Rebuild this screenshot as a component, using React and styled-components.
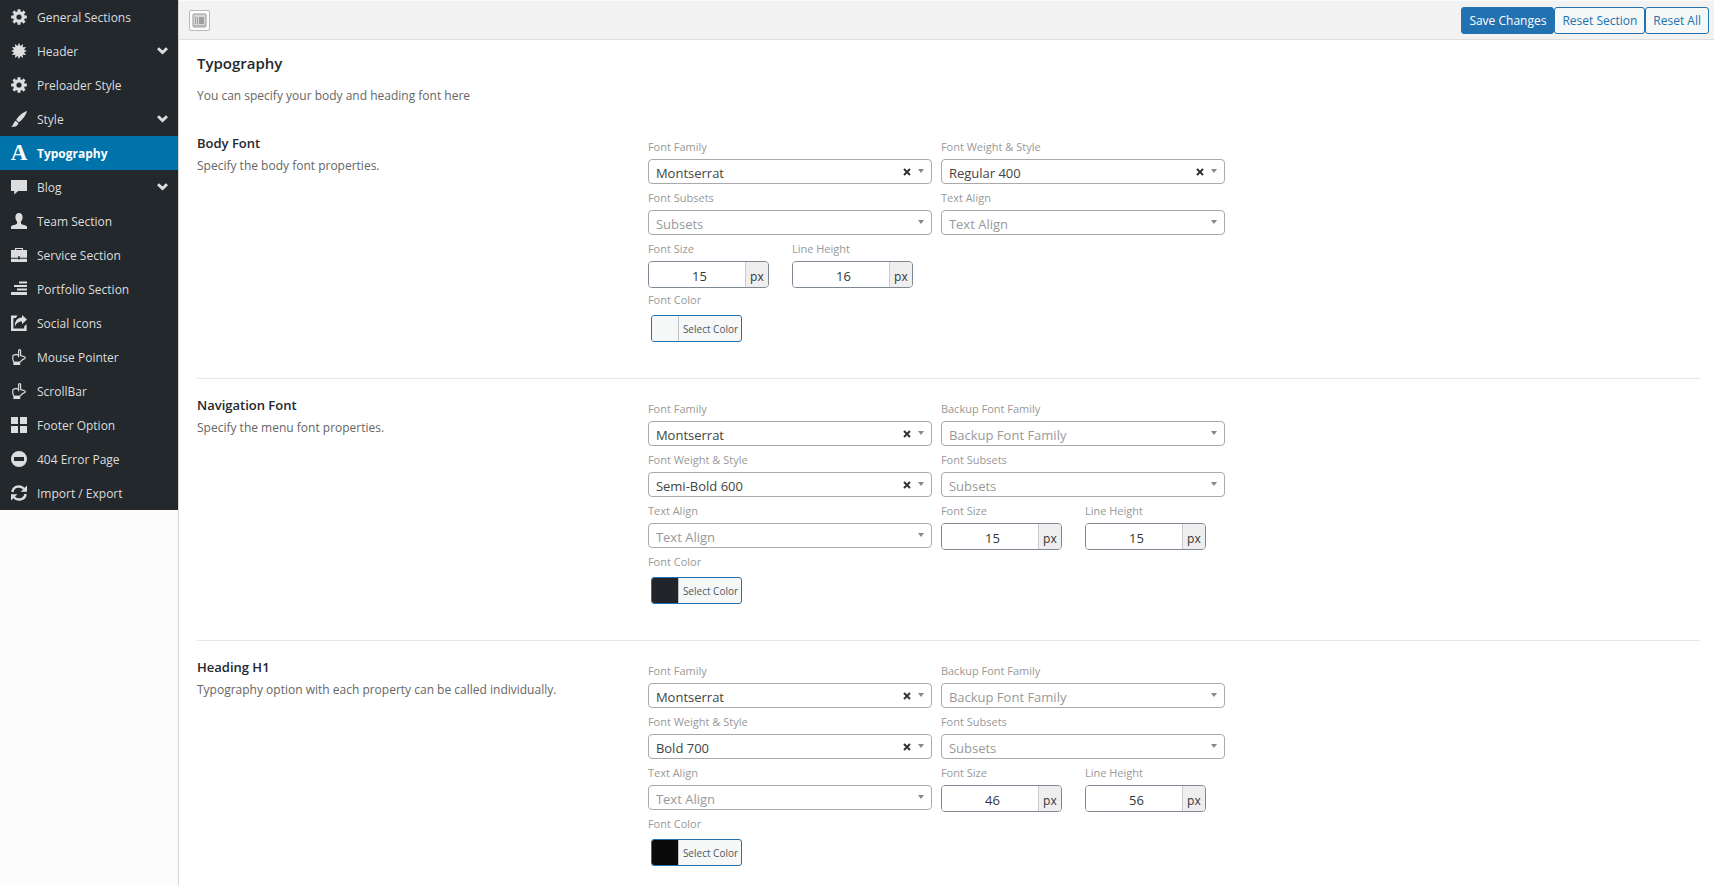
import React, { useState } from "react";
import styled, { createGlobalStyle } from "styled-components";

const GlobalStyle = createGlobalStyle`
  * {
    box-sizing: border-box;
  }

  body {
    margin: 0;
    background: #ffffff;
    color: #3c434a;
    font-family: "Open Sans", "Noto Sans", sans-serif;
    font-size: 12px;
  }

  button,
  input,
  select {
    font-family: inherit;
  }
`;

const Page = styled.div`
  display: flex;
  min-height: 100vh;
`;

const Sidebar = styled.nav`
  flex: 0 0 179px;
  background: #fcfcfc;
  border-right: 1px solid #d4d4d4;
`;

const Menu = styled.ul`
  margin: 0;
  padding: 0;
  list-style: none;
  background: #23282d;
`;

const MenuLink = styled.a`
  display: flex;
  align-items: center;
  gap: 10px;
  height: 34px;
  padding: 0 10px 0 11px;
  background: ${(props) => (props.$active ? "#0073aa" : "transparent")};
  color: ${(props) => (props.$active ? "#ffffff" : "#dddddd")};
  font-weight: ${(props) => (props.$active ? 700 : 400)};
  line-height: 18px;
  text-decoration: none;

  span {
    flex: 1;
    padding-top: 2px;
  }

  svg {
    flex: none;
    fill: currentColor;
  }
`;

const LetterIcon = styled.b`
  display: flex;
  justify-content: center;
  width: 16px;
  font-family: "Liberation Serif", serif;
  font-size: 23px;
  line-height: 16px;
`;

const Main = styled.main`
  flex: 1;
  min-width: 0;
`;

const Toolbar = styled.header`
  display: flex;
  align-items: center;
  height: 40px;
  padding: 1px 5px 0 10px;
  background: #f2f2f2;
  border-top: 1px solid #fbfbfb;
  border-bottom: 1px solid #dedede;
`;

const ExpandButton = styled.button`
  display: flex;
  align-items: center;
  justify-content: center;
  width: 21px;
  height: 21px;
  margin-right: auto;
  padding: 0;
  background: #fcfcfc;
  border: 1px solid #bbbbbb;
  border-radius: 2px;
`;

const ActionButton = styled.button`
  height: 27px;
  padding: 0 7px;
  background: ${(props) => (props.$primary ? "#2271b1" : "#f6f7f7")};
  border: 1px solid #2271b1;
  border-radius: 3px;
  color: ${(props) => (props.$primary ? "#ffffff" : "#2271b1")};
  font-size: 12px;
  line-height: 24px;
`;

const Content = styled.div`
  padding: 0 14px 0 18px;
`;

const Intro = styled.div`
  height: 77px;
  padding-top: 11px;

  h1 {
    margin: 0 0 12px;
    color: #23282d;
    font-size: 15px;
    font-weight: 600;
    line-height: 24px;
  }

  p {
    margin: 0;
    color: #666666;
    line-height: 18px;
  }
`;

const Section = styled.section`
  display: flex;
  padding: 21px 0 36px;
  border-bottom: 1px solid #e7e7e7;

  &:last-child {
    padding-bottom: 0;
    border-bottom: 0;
  }
`;

const SectionInfo = styled.div`
  flex: 0 0 30%;

  h2 {
    margin: -4px 0 4px;
    color: #23282d;
    font-size: 13px;
    font-weight: 600;
    line-height: 18px;
  }

  p {
    margin: 0;
    color: #666666;
    line-height: 20px;
  }
`;

const Fields = styled.div`
  display: grid;
  flex: 0 1 577px;
  grid-template-columns: 1fr 1fr;
  grid-auto-rows: minmax(51px, auto);
  column-gap: 9px;
`;

const Label = styled.label`
  display: block;
  margin-bottom: 3px;
  color: #999999;
  font-size: 11px;
  line-height: 18px;
`;

const SelectBox = styled.div`
  position: relative;

  select {
    display: block;
    width: 100%;
    height: 25px;
    padding: 2px 40px 0 7px;
    appearance: none;
    background: #ffffff;
    border: 1px solid #aaaaaa;
    border-radius: 4px;
    color: ${(props) => (props.$empty ? "#999999" : "#444444")};
    font-size: 13px;
    line-height: 20px;
  }
`;

const SelectTools = styled.div`
  position: absolute;
  top: 1px;
  right: 8px;
  display: flex;
  align-items: center;
  gap: 7px;
  height: 22px;
  pointer-events: none;

  button {
    display: flex;
    padding: 2px 0 0;
    background: none;
    border: 0;
    pointer-events: auto;
  }
`;

const NumberPair = styled.div`
  display: flex;
  gap: 23px;
`;

const NumberBox = styled.div`
  display: flex;
  width: 121px;
  height: 27px;
  border: 1px solid #7e8993;
  border-radius: 4px;
  overflow: hidden;

  input {
    flex: 1;
    min-width: 0;
    padding: 2px 0 0 5px;
    border: 0;
    color: #32373c;
    font-size: 13px;
    text-align: center;
  }

  span {
    width: 23px;
    padding-top: 3px;
    background: #eeeeee;
    border-left: 1px solid #cccccc;
    color: #32373c;
    line-height: 24px;
    text-align: center;
  }
`;

const ColorButton = styled.button`
  display: flex;
  height: 27px;
  margin: 6px 0 0 3px;
  padding: 0;
  background: #f6f7f7;
  border: 1px solid #2271b1;
  border-radius: 3px;
  overflow: hidden;
  color: #50575e;
  font-size: 10px;
  line-height: 27px;

  i {
    width: 27px;
    align-self: stretch;
    background: ${(props) => props.$color};
    border-right: 1px solid #c3c4c7;
  }

  span {
    padding: 0 3px 0 4px;
  }
`;

const radial = (points) =>
  points.map(([r, deg]) => {
    const a = (deg * Math.PI) / 180;
    return `${(8 + r * Math.sin(a)).toFixed(2)} ${(8 - r * Math.cos(a)).toFixed(2)}`;
  });

const gearTeeth = radial(
  [0, 45, 90, 135, 180, 225, 270, 315].flatMap((d) => [
    [5.9, d - 14],
    [8, d - 11],
    [8, d + 11],
    [5.9, d + 14],
  ])
);

const burstSpikes = radial(
  Array.from({ length: 24 }, (_, i) => [i % 2 ? 5.2 : 8.2, i * 15])
);

const icons = {
  gear: (
    <path
      fillRule="evenodd"
      d={`M${gearTeeth.join("L")}ZM8 5.4a2.6 2.6 0 1 0 0 5.2a2.6 2.6 0 1 0 0-5.2z`}
    />
  ),
  burst: <path d={`M${burstSpikes.join("L")}Z`} />,
  brush: (
    <path d="M16 0C12 1.2 7.2 5.2 5.2 9l2.7 2.3C11.6 8.6 15.2 4 16 0zM4.7 9.7C2.6 10.6 3.2 13.2 0 15.8c3.4.3 7-.6 7.4-3.8z" />
  ),
  comment: <path d="M0 1h16v11H7.2L3.2 15.6V12H0z" />,
  person: (
    <path d="M8 0C5.5 0 4.4 1.8 4.4 4c0 2 .8 3.7 1.7 4.8v1.4C6 12 0 12 0 13.7V16h16v-2.3c0-1.7-6-1.7-6.1-3.5V8.8c.9-1.1 1.7-2.8 1.7-4.8C11.6 1.8 10.5 0 8 0z" />
  ),
  briefcase: (
    <path
      fillRule="evenodd"
      d="M4 1h8v2h4v7.7H8.7V9H7.3v1.7H0V3h4zM5.2 2v1h5.6V2zM0 11.7h7.3v.8h1.4v-.8H16V15H0z"
    />
  ),
  lines: <path d="M8 .5h8v2H8zM3 4h13v2H3zM6 7.5h10v2H6zM0 11h16v3H0z" />,
  share: (
    <path d="M0 .6h6.5L4.8 3H2.4v10.6h10.8v-2.4l2.4-2V16H0zM11 0l5 4.6-5 4.6V6.6C7.6 6.6 5.2 8 4 11.8 3.4 6.3 6.3 2.8 11 2.6z" />
  ),
  hand: (
    <>
      <path
        d="M3 13C1.6 11.6 1.6 9 2 6.4L5 5.4l2.6 1V1.6c0-1.2 2-1.2 2 0v5l4 1.2c1 .4.8 1.6-.2 2l-1.8.8L9 13.2M7.6 6.2v2"
        fill="none"
        stroke="currentColor"
        strokeWidth="1.2"
      />
      <path d="M2.4 12.6h6.8V16H2.4z" />
    </>
  ),
  grid: <path d="M0 0h7v7H0zM9 0h7v7H9zM0 9h7v7H0zM9 9h7v7H9z" />,
  minus: (
    <path
      fillRule="evenodd"
      d="M8 0a8 8 0 1 0 0 16A8 8 0 1 0 8 0zM3 6h10v4H3z"
    />
  ),
  sync: (
    <>
      <path
        d="M1.4 7C2.2 1 9.6-.2 13 3.8M14.6 9C13.8 15 6.4 16.2 3 12.2"
        fill="none"
        stroke="currentColor"
        strokeWidth="2.4"
      />
      <path d="M16 .4v6.4H9.6zM0 15.6V9.2h6.4z" />
    </>
  ),
};

const menuItems = [
  { name: "General Sections", icon: "gear" },
  { name: "Header", icon: "burst", open: true },
  { name: "Preloader Style", icon: "gear" },
  { name: "Style", icon: "brush", open: true },
  { name: "Typography", icon: "letter", active: true },
  { name: "Blog", icon: "comment", open: true },
  { name: "Team Section", icon: "person" },
  { name: "Service Section", icon: "briefcase" },
  { name: "Portfolio Section", icon: "lines" },
  { name: "Social Icons", icon: "share" },
  { name: "Mouse Pointer", icon: "hand" },
  { name: "ScrollBar", icon: "hand" },
  { name: "Footer Option", icon: "grid" },
  { name: "404 Error Page", icon: "minus" },
  { name: "Import / Export", icon: "sync" },
];

const sections = [
  {
    id: "body",
    title: "Body Font",
    text: "Specify the body font properties.",
    color: "#f6f7f7",
    fields: [
      { label: "Font Family", value: "Montserrat" },
      { label: "Font Weight & Style", value: "Regular 400" },
      { label: "Font Subsets", placeholder: "Subsets" },
      { label: "Text Align", placeholder: "Text Align" },
      { size: 15, height: 16, wide: true },
    ],
  },
  {
    id: "nav",
    title: "Navigation Font",
    text: "Specify the menu font properties.",
    color: "#212529",
    fields: [
      { label: "Font Family", value: "Montserrat" },
      { label: "Backup Font Family", placeholder: "Backup Font Family" },
      { label: "Font Weight & Style", value: "Semi-Bold 600" },
      { label: "Font Subsets", placeholder: "Subsets" },
      { label: "Text Align", placeholder: "Text Align" },
      { size: 15, height: 15 },
    ],
  },
  {
    id: "h1",
    title: "Heading H1",
    text: "Typography option with each property can be called individually.",
    color: "#0a0a0a",
    fields: [
      { label: "Font Family", value: "Montserrat" },
      { label: "Backup Font Family", placeholder: "Backup Font Family" },
      { label: "Font Weight & Style", value: "Bold 700" },
      { label: "Font Subsets", placeholder: "Subsets" },
      { label: "Text Align", placeholder: "Text Align" },
      { size: 46, height: 56 },
    ],
  },
];

function MenuIcon({ name }) {
  if (name === "letter") {
    return <LetterIcon aria-hidden="true">A</LetterIcon>;
  }
  return (
    <svg width="16" height="16" viewBox="0 0 16 16" aria-hidden="true">
      {icons[name]}
    </svg>
  );
}

function SelectField({ id, label, value, placeholder }) {
  const [current, setCurrent] = useState(value || "");

  return (
    <div>
      <Label htmlFor={id}>{label}</Label>
      <SelectBox $empty={!current}>
        <select id={id} value={current} onChange={(e) => setCurrent(e.target.value)}>
          <option value="">{placeholder || ""}</option>
          {value && <option value={value}>{value}</option>}
        </select>
        <SelectTools>
          {current && (
            <button type="button" aria-label="Clear" onClick={() => setCurrent("")}>
              <svg width="8" height="8" viewBox="0 0 8 8">
                <path d="M1 1l6 6M7 1l-6 6" stroke="#333333" strokeWidth="2" />
              </svg>
            </button>
          )}
          <svg width="6" height="4" viewBox="0 0 6 4">
            <path d="M0 0h6L3 4z" fill="#888888" />
          </svg>
        </SelectTools>
      </SelectBox>
    </div>
  );
}

function NumberField({ id, label, value }) {
  return (
    <div>
      <Label htmlFor={id}>{label}</Label>
      <NumberBox>
        <input id={id} type="text" defaultValue={value} />
        <span>px</span>
      </NumberBox>
    </div>
  );
}

function FontSection({ section }) {
  return (
    <Section>
      <SectionInfo>
        <h2>{section.title}</h2>
        <p>{section.text}</p>
      </SectionInfo>
      <Fields>
        {section.fields.map((field, i) =>
          field.size ? (
            <React.Fragment key="numbers">
              <NumberPair>
                <NumberField id={`${section.id}-size`} label="Font Size" value={field.size} />
                <NumberField
                  id={`${section.id}-height`}
                  label="Line Height"
                  value={field.height}
                />
              </NumberPair>
              {field.wide && <div />}
            </React.Fragment>
          ) : (
            <SelectField key={field.label} id={`${section.id}-${i}`} {...field} />
          )
        )}
        <div>
          <Label htmlFor={`${section.id}-color`}>Font Color</Label>
          <ColorButton id={`${section.id}-color`} type="button" $color={section.color}>
            <i />
            <span>Select Color</span>
          </ColorButton>
        </div>
      </Fields>
    </Section>
  );
}

export default function App() {
  return (
    <Page>
      <GlobalStyle />
      <Sidebar>
        <Menu>
          {menuItems.map((item) => (
            <li key={item.name}>
              <MenuLink href="#" $active={item.active}>
                <MenuIcon name={item.icon} />
                <span>{item.name}</span>
                {item.open && (
                  <svg width="11" height="8" viewBox="0 0 11 8" aria-hidden="true">
                    <path d="M0 2.2L2 .2l3.5 3.4L9 .2l2 2L5.5 7.4z" />
                  </svg>
                )}
              </MenuLink>
            </li>
          ))}
        </Menu>
      </Sidebar>
      <Main>
        <Toolbar>
          <ExpandButton type="button" aria-label="Expand">
            <svg width="15" height="15" viewBox="0 0 15 15">
              <rect x="1" y="1" width="13" height="13" rx="1" fill="#d8d8d8" stroke="#999999" />
              <path d="M3 4h1v7H3zM5 4h1v7H5zM7 4h5v7H7z" fill="#a0a0a0" />
              <path d="M2 12h11v1H2z" fill="#b4b4b4" />
            </svg>
          </ExpandButton>
          <ActionButton type="button" $primary>
            Save Changes
          </ActionButton>
          <ActionButton type="button">Reset Section</ActionButton>
          <ActionButton type="button">Reset All</ActionButton>
        </Toolbar>
        <Content>
          <Intro>
            <h1>Typography</h1>
            <p>You can specify your body and heading font here</p>
          </Intro>
          {sections.map((section) => (
            <FontSection key={section.id} section={section} />
          ))}
        </Content>
      </Main>
    </Page>
  );
}
